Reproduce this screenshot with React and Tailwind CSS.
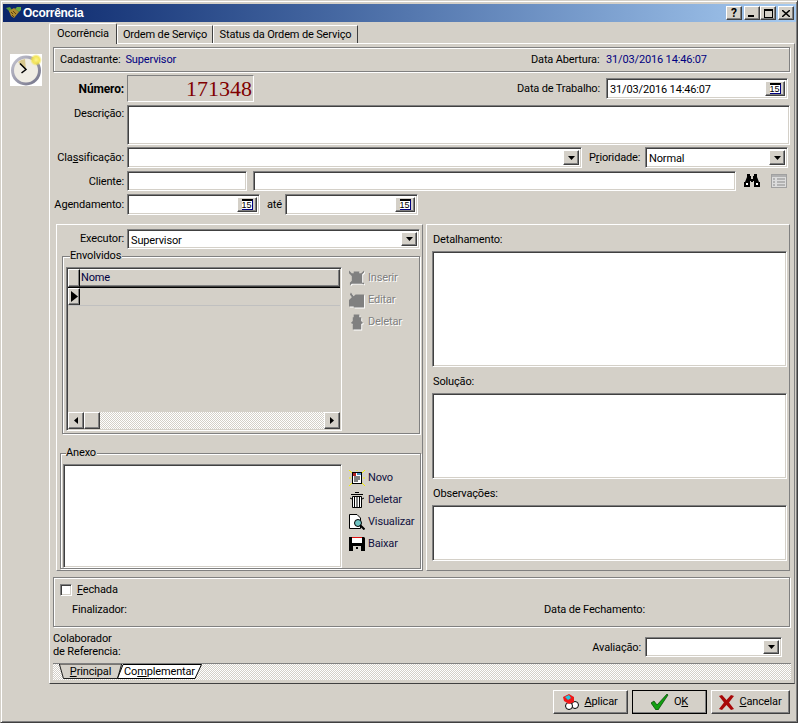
import React from "react";

const raised = "border border-t-white border-l-white border-b-[#404040] border-r-[#404040] shadow-[inset_-1px_-1px_0_#808080]";
const sunken = "border border-t-[#808080] border-l-[#808080] border-b-white border-r-white shadow-[inset_1px_1px_0_#404040,inset_-1px_-1px_0_#d4d0c8]";
const etched = "border border-[#808080] shadow-[1px_1px_0_#ffffff,inset_1px_1px_0_#ffffff]";
const dither = "bg-[repeating-conic-gradient(#ffffff_0_25%,#d4d0c8_0_50%)] bg-[length:2px_2px]";

function Caret({ right }) {
  return right ? (
    <svg width="4" height="7" viewBox="0 0 4 7"><path d="M0 0L4 3.500L0 7Z" fill="#000" /></svg>
  ) : (
    <svg width="4" height="7" viewBox="0 0 4 7"><path d="M4 0L0 3.500L4 7Z" fill="#000" /></svg>
  );
}

function Down() {
  return (
    <svg width="7" height="4" viewBox="0 0 7 4"><path d="M0 0H7L3.500 4Z" fill="#000" /></svg>
  );
}

function Combo({ className, value }) {
  return (
    <div className={`${sunken} bg-white flex items-stretch p-[2px] ${className}`}>
      <div className="flex-1 pl-[1px] leading-[17px]">{value}</div>
      <div className={`${raised} bg-[#d4d0c8] w-[16px] flex items-center justify-center`}>
        <Down />
      </div>
    </div>
  );
}

function DateBtn() {
  return (
    <div className={`${raised} bg-[#d4d0c8] w-[20px] flex items-center justify-center`}>
      <span className="w-[11px] h-[11px] border-t-[2px] border-r border-b border-t-black border-r-[#000080] border-b-[#000080] bg-white text-[9px] leading-[9px] tracking-[0px] text-center text-black font-['Liberation_Sans',sans-serif]">15</span>
    </div>
  );
}

function DateEdit({ className, value }) {
  return (
    <div className={`${sunken} bg-white flex items-stretch p-[2px] ${className}`}>
      <div className="flex-1 pl-[1px] leading-[17px]">{value}</div>
      <DateBtn />
    </div>
  );
}

function Edit({ className }) {
  return <div className={`${sunken} bg-white ${className}`} />;
}

function Label({ children, className = "" }) {
  return <div className={`w-[74px] shrink-0 text-right pr-[3px] whitespace-nowrap ${className}`}>{children}</div>;
}

function Legend({ children, className }) {
  return <span className={`absolute top-[-8px] bg-[#d4d0c8] leading-[14px] pr-[1px] ${className}`}>{children}</span>;
}

function ClockIcon() {
  return (
    <svg width="32" height="32" viewBox="0 0 32 32" className="block">
      <defs>
        <radialGradient id="glow" cx="0.5" cy="0.5" r="0.5">
          <stop offset="0" stopColor="#fff68a" />
          <stop offset="0.6" stopColor="#f2e24a" stopOpacity="0.9" />
          <stop offset="1" stopColor="#f2e24a" stopOpacity="0" />
        </radialGradient>
        <linearGradient id="ring" x1="0" y1="0" x2="1" y2="1">
          <stop offset="0" stopColor="#c8c8d4" />
          <stop offset="1" stopColor="#6f6f85" />
        </linearGradient>
      </defs>
      <rect width="32" height="32" fill="#fff" />
      <circle cx="16" cy="16.500" r="15" fill="url(#ring)" />
      <circle cx="16" cy="16.500" r="12" fill="#efece4" />
      <path d="M16 16L8 8A12 12 0 0 1 15 5Z" fill="#d8c88e" />
      <path d="M10 9.500L16 15.500L11.500 19" fill="none" stroke="#000" strokeWidth="1.500" />
      <circle cx="26" cy="6" r="6" fill="url(#glow)" />
    </svg>
  );
}

function HandIcon() {
  return (
    <svg width="16" height="14" viewBox="0 0 16 14" className="block">
      <path d="M0 2L4 1L6 4L4 6Z" fill="#5a9a3c" />
      <path d="M15 1L11 1L9 3L13 6L15 4Z" fill="#6aaa44" />
      <path d="M3 5L8 2L13 6L8 12L5 10Z" fill="#b08a2e" />
      <path d="M5 6L7 8M7 5L10 8M6 9L8 11" stroke="#5c4210" strokeWidth="1" />
    </svg>
  );
}

function Binoculars() {
  return (
    <svg width="16" height="14" viewBox="0 0 16 14" className="block">
      <path d="M3 0H6V2H7V5H9V2H10V0H13V3L15 8H16V13H10V7H9V8H7V7H6V13H0V8H1L3 3Z" fill="#000" />
      <rect x="2" y="9" width="2" height="2" fill="#fff" />
      <rect x="12" y="9" width="2" height="2" fill="#fff" />
    </svg>
  );
}

function ListIcon() {
  return (
    <svg width="16" height="14" viewBox="0 0 16 14" className="block">
      <rect x="0.500" y="0.500" width="15" height="13" fill="#dcdcdc" stroke="#a0a0a0" />
      <rect x="1" y="1" width="14" height="2" fill="#b0b0b0" />
      <path d="M2 5H4M2 8H4M2 11H4M6 5H14M6 8H14M6 11H14" stroke="#8a8a8a" strokeWidth="1" />
    </svg>
  );
}

function DisabledIcon({ kind }) {
  const d = {
    ins: "M0 0L3 3H5V1H11V3H13L16 0V2L14 4V13H16V15L14 14H3L1 16V13L3 11V6L0 3Z",
    edit: "M2 0L5 4L7 2H16V16H5V15H0V8L2 6L3 5L1 2Z",
    del: "M5 0H11V3H13V7L15 9L13 10V16H4V10L2 9L4 7V3H5Z",
  }[kind];
  return (
    <svg width="16" height="17" viewBox="0 0 17 17" className="block overflow-visible">
      <path d={d} fill="#fff" transform="translate(1 1)" />
      <path d={d} fill="#808080" />
    </svg>
  );
}

function NovoIcon() {
  return (
    <svg width="16" height="16" viewBox="0 0 16 16" className="block">
      <path d="M0 0L3 3M16 0L13 3M0 16L3 13M16 16L13 13M0 8H2M14 8H16M8 0V1" stroke="#f4f000" strokeWidth="1" />
      <rect x="3.500" y="2.500" width="9" height="11" fill="#fff" stroke="#000" />
      <rect x="4" y="3" width="3" height="3" fill="#b02020" />
      <rect x="8" y="3" width="4" height="2" fill="#4a90c0" />
      <path d="M5 7H11M5 9H11M5 11H9" stroke="#000" strokeWidth="1" />
    </svg>
  );
}

function TrashIcon() {
  return (
    <svg width="16" height="16" viewBox="0 0 16 16" className="block">
      <path d="M6 0.500H10M2 2.500H14" stroke="#000" strokeWidth="1" />
      <path d="M3.500 4.500H12.500V15.500H3.500Z" fill="#fff" stroke="#000" />
      <path d="M5.500 5V15M8 5V15M10.500 5V15" stroke="#000" strokeWidth="1" />
      <path d="M1 6L3 7M15 6L13 7" stroke="#000" strokeWidth="1" />
    </svg>
  );
}

function ViewIcon() {
  return (
    <svg width="16" height="16" viewBox="0 0 16 16" className="block">
      <path d="M0.500 0.500H8L11.500 4V14.500H0.500Z" fill="#fff" stroke="#000" />
      <circle cx="9" cy="9" r="3.500" fill="#6fc3c3" stroke="#000" />
      <path d="M11 11L15.500 15.500" stroke="#000" strokeWidth="2" />
    </svg>
  );
}

function DiskIcon() {
  return (
    <svg width="16" height="16" viewBox="0 0 16 16" className="block">
      <path d="M0 1H15L16 2V15H0Z" fill="#000" />
      <rect x="3" y="1" width="10" height="1" fill="#e01010" />
      <rect x="3" y="2" width="10" height="5" fill="#fff" />
      <rect x="4" y="10" width="8" height="5" fill="#d4d0c8" />
      <rect x="7" y="11" width="2" height="2" fill="#000" />
    </svg>
  );
}

function ApplyIcon() {
  return (
    <svg width="16" height="16" viewBox="0 0 16 16" className="block">
      <circle cx="12" cy="11" r="3.500" fill="#fff" stroke="#000" />
      <circle cx="6" cy="12" r="3.500" fill="#fff" stroke="#000" />
      <path d="M0 3L6 0L11 3L11 8L6 10L1 7Z" fill="#f01818" />
      <path d="M2 3L6 1L8 4L5 6Z" fill="#22c8e0" />
    </svg>
  );
}

function CheckIcon() {
  return (
    <svg width="18" height="16" viewBox="0 0 18 16" className="block">
      <path d="M0 9L3 7L6 11L16 0L17 1L7 16H5Z" fill="#12a012" stroke="#004000" strokeWidth="0.700" />
    </svg>
  );
}

function CrossIcon() {
  return (
    <svg width="15" height="15" viewBox="0 0 15 15" className="block">
      <path d="M0 1L3 0L7.500 5L12 0L15 1L10 7.500L15 14L12 15L7.500 10L3 15L0 14L5 7.500Z" fill="#a80808" />
    </svg>
  );
}

function SideBtn({ icon, disabled, children }) {
  return (
    <div className="h-[22px] flex items-center">
      <div className="w-[19px] shrink-0">{icon}</div>
      <span className={disabled ? "text-[#808080] [text-shadow:1px_1px_0_#ffffff]" : "text-[#101040]"}>{children}</span>
    </div>
  );
}

function TitleBtn({ children, className = "" }) {
  return (
    <div className={`${raised} w-[16px] h-[14px] bg-[#d4d0c8] flex items-center justify-center text-black ${className}`}>
      {children}
    </div>
  );
}

function Tab({ children, active, className }) {
  return active ? (
    <div className={`relative z-10 h-[21px] -mb-[1px] bg-[#d4d0c8] border-t border-l border-white border-r border-r-[#404040] rounded-t-[2px] flex items-center justify-center whitespace-nowrap ${className}`}>
      {children}
    </div>
  ) : (
    <div className={`h-[18px] bg-[#d4d0c8] border-t border-l border-white border-r border-r-[#404040] flex items-center justify-center pt-[1px] whitespace-nowrap ${className}`}>
      {children}
    </div>
  );
}

function BottomTab({ children, w, white, points }) {
  return (
    <div className={`relative h-[15px] flex items-center justify-center ${w}`}>
      <svg className="absolute inset-0" width="100%" height="100%" viewBox="0 0 85 15" preserveAspectRatio="none">
        <polygon points={points} fill={white ? "#fff" : "#d4d0c8"} stroke="#000" strokeWidth="1" />
      </svg>
      <span className="relative leading-[14px]">{children}</span>
    </div>
  );
}

function Btn({ children, icon, strong, className }) {
  return (
    <div className={`${strong ? "outline outline-1 outline-black -outline-offset-1" : ""} ${raised} h-[24px] bg-[#d4d0c8] flex items-center justify-center gap-[5px] ${className}`}>
      {icon}
      <span>{children}</span>
    </div>
  );
}

function Memo({ className }) {
  return <div className={`${sunken} bg-white ml-[5px] w-[355px] ${className}`} />;
}

export default function App() {
  return (
    <div className="w-[798px] h-[723px] box-border bg-[#d4d0c8] border border-t-[#d4d0c8] border-l-[#d4d0c8] border-r-[#404040] border-b-[#404040] shadow-[inset_1px_1px_0_#ffffff,inset_-1px_-1px_0_#808080] pt-[3px] pl-[2px] pr-[2px] text-[11px] leading-[14px] tracking-[-0.15px] text-black font-['Roboto',sans-serif] overflow-hidden">
      {/* title bar */}
      <div className="h-[18px] w-[793px] flex items-center bg-gradient-to-r from-[#0a246a] to-[#a6caf0] pl-[3px] pr-[2px]">
        <HandIcon />
        <span className="ml-[1px] text-white font-bold text-[12px] tracking-[-0.3px] flex-1 font-['Liberation_Sans',sans-serif]">Ocorrência</span>
        <TitleBtn className="font-bold text-[12px] mr-[2px]">?</TitleBtn>
        <TitleBtn>
          <span className="w-[6px] h-[2px] bg-black mt-[6px] mr-[2px]" />
        </TitleBtn>
        <TitleBtn className="mr-[2px]">
          <span className="w-[9px] h-[9px] border border-t-[2px] border-black" />
        </TitleBtn>
        <TitleBtn>
          <svg width="8" height="7" viewBox="0 0 8 7"><path d="M0 0L8 7M8 0L0 7" stroke="#000" strokeWidth="1.500" /></svg>
        </TitleBtn>
      </div>

      <div className="flex h-[662px]">
        {/* left gutter */}
        <div className="w-[46px] shrink-0 pt-[32px] pl-[7px]">
          <ClockIcon />
        </div>

        {/* tabbed area */}
        <div className="w-[746px] shrink-0">
          <div className="h-[21px] flex items-end">
            <Tab active className="w-[68px]">Ocorrência</Tab>
            <Tab className="w-[96px]">Ordem de Serviço</Tab>
            <Tab className="w-[145px]">Status da Ordem de Serviço</Tab>
          </div>

          <div className="h-[641px] border border-t-white border-l-white border-r-[#808080] border-b-[#404040] pl-[3px] pt-[3px]">
            <div className={`${etched} w-[737px] h-[25px] flex items-center pl-[6px]`}>
              <span className="w-[471px] flex">
                <span>Cadastrante:</span>
                <span className="ml-[5px] text-[#000080]">Supervisor</span>
              </span>
              <span className="w-[75px]">Data Abertura:</span>
              <span className="text-[#000080]">31/03/2016 14:46:07</span>
            </div>

            <div className="mt-[3px] h-[27px] flex items-center">
              <Label className="font-bold text-[12px]">Número:</Label>
              <div className={`w-[127px] h-[27px] border border-t-[#808080] border-l-[#808080] border-b-white border-r-white flex items-center justify-end pr-[1px] text-[#800000] text-[22px] tracking-[0px] font-['Liberation_Serif',serif]`}>
                171348
              </div>
              <div className="w-[252px] shrink-0" />
              <div className="w-[100px] shrink-0 text-right pr-[6px] whitespace-nowrap">Data de Trabalho:</div>
              <DateEdit className="w-[182px] h-[21px]" value="31/03/2016 14:46:07" />
            </div>

            <div className="mt-[3px] h-[40px] flex">
              <Label className="pt-[2px]">Descrição:</Label>
              <Edit className="w-[663px] h-[40px]" />
            </div>

            <div className="mt-[2px] h-[21px] flex items-center">
              <Label className="pt-[1px]">
                Cla<u>s</u>sificação:
              </Label>
              <Combo className="w-[455px] h-[21px]" />
              <div className="ml-[7px] w-[56px] pt-[1px]">
                P<u>r</u>ioridade:
              </div>
              <Combo className="w-[143px] h-[21px]" value="Normal" />
            </div>

            <div className="mt-[3px] h-[20px] flex items-center">
              <Label className="pt-[2px]">Cliente:</Label>
              <Edit className="w-[120px] h-[20px]" />
              <Edit className="ml-[6px] w-[483px] h-[20px]" />
              <div className="ml-[8px]"><Binoculars /></div>
              <div className="ml-[11px]"><ListIcon /></div>
            </div>

            <div className="mt-[3px] h-[20px] flex items-center">
              <Label className="pt-[2px]">Agendamento:</Label>
              <DateEdit className="w-[133px] h-[21px]" />
              <span className="ml-[7px] w-[18px] pt-[2px]">até</span>
              <DateEdit className="w-[133px] h-[21px]" />
            </div>

            {/* lower panels */}
            <div className="mt-[10px] ml-[3px] h-[347px] flex">
              <div className="w-[367px] h-[347px] border border-t-white border-l-white border-b-[#808080] border-r-[#808080] pt-[3px]">
                <div className="h-[21px] flex items-center">
                  <div className="w-[70px] shrink-0 text-right pr-[3px]">Executor:</div>
                  <Combo className="w-[293px] h-[20px]" value="Supervisor" />
                </div>

                <div className={`${etched} relative mt-[7px] ml-[5px] w-[358px] h-[178px] pl-[3px] pt-[10px]`}>
                  <Legend className="left-[7px]">Envolvidos</Legend>
                  <div className="flex">
                    <div className={`${sunken} w-[276px] h-[164px] bg-[#d4d0c8] p-[1px] flex flex-col`}>
                      <div className="flex h-[19px] shrink-0 border-b border-black">
                        <div className={`${raised} border-r-black w-[12px]`} />
                        <div className={`${raised} border-l-0 flex-1 flex items-center pl-[1px] text-[#000040]`}>Nome</div>
                      </div>
                      <div className="flex h-[18px] shrink-0 border-b border-[#c0c0c0]">
                        <div className={`${raised} border-r-black w-[12px] flex items-center justify-start pl-[2px]`}>
                          <svg width="7" height="11" viewBox="0 0 7 11"><path d="M0 0L7 5.500L0 11Z" fill="#000" /></svg>
                        </div>
                      </div>
                      <div className="flex-1" />
                      <div className="flex h-[17px] shrink-0">
                        <div className={`${raised} w-[16px] bg-[#d4d0c8] flex items-center justify-center`}><Caret /></div>
                        <div className={`${raised} w-[16px] bg-[#d4d0c8]`} />
                        <div className={`flex-1 ${dither}`} />
                        <div className={`${raised} w-[16px] bg-[#d4d0c8] flex items-center justify-center`}><Caret right /></div>
                      </div>
                    </div>
                    <div className="ml-[7px]">
                      <SideBtn disabled icon={<DisabledIcon kind="ins" />}>Inserir</SideBtn>
                      <SideBtn disabled icon={<DisabledIcon kind="edit" />}>Editar</SideBtn>
                      <SideBtn disabled icon={<DisabledIcon kind="del" />}>Deletar</SideBtn>
                    </div>
                  </div>
                </div>

                <div className={`${etched} relative mt-[19px] ml-[3px] w-[361px] h-[116px] pl-[2px] pt-[10px]`}>
                  <Legend className="left-[5px]">Anexo</Legend>
                  <div className="flex">
                    <div className={`${sunken} w-[279px] h-[104px] bg-white`} />
                    <div className="ml-[7px] mt-[3px]">
                      <SideBtn icon={<NovoIcon />}>Novo</SideBtn>
                      <SideBtn icon={<TrashIcon />}>Deletar</SideBtn>
                      <SideBtn icon={<ViewIcon />}>Visualizar</SideBtn>
                      <SideBtn icon={<DiskIcon />}>Baixar</SideBtn>
                    </div>
                  </div>
                </div>
              </div>

              <div className="w-[364px] h-[347px] ml-[3px] border border-t-white border-l-white border-b-[#808080] border-r-[#808080]">
                <div className="pl-[6px] pt-[8px] h-[26px]">Detalhamento:</div>
                <Memo className="h-[116px]" />
                <div className="pl-[6px] pt-[8px] h-[26px]">Solução:</div>
                <Memo className="h-[86px]" />
                <div className="pl-[6px] pt-[8px] h-[26px]">Observações:</div>
                <Memo className="h-[56px]" />
              </div>
            </div>

            <div className={`${etched} mt-[6px] w-[737px] h-[50px] pl-[6px] pt-[5px]`}>
              <div className="flex items-center h-[13px]">
                <div className={`${sunken} w-[12px] h-[12px] bg-white`} />
                <span className="ml-[5px]"><u>F</u>echada</span>
              </div>
              <div className="flex mt-[7px] pl-[12px]">
                <span className="w-[472px]">Finalizador:</span>
                <span>Data de Fechamento:</span>
              </div>
            </div>

            <div className="mt-[4px] h-[32px] flex items-start">
              <div className="w-[530px] pt-[1px] leading-[13px]">
                Colaborador<br />de Referencia:
              </div>
              <div className="w-[62px] pt-[10px] text-right pr-[4px]">Avaliação:</div>
              <Combo className="mt-[6px] w-[137px] h-[20px]" />
            </div>

            <div className={`w-[738px] h-[17px] border-t border-[#808080] pl-[6px] ${dither} flex items-start`}>
              <BottomTab w="w-[63px]" points="0.500,0 6,14.500 79,14.500 84.500,0" ><u>P</u>rincipal</BottomTab>
              <BottomTab w="w-[85px] -ml-[5px]" white points="6,0.500 0.500,14.500 78,14.500 84.500,0.500">Co<u>m</u>plementar</BottomTab>
            </div>
          </div>
        </div>
      </div>

      {/* footer buttons */}
      <div className="pt-[6px] flex justify-start pl-[550px]">
        <Btn icon={<ApplyIcon />} className="w-[75px]"><u>A</u>plicar</Btn>
        <Btn strong icon={<CheckIcon />} className="w-[75px] ml-[4px]">O<u>K</u></Btn>
        <Btn icon={<CrossIcon />} className="w-[79px] ml-[4px]"><u>C</u>ancelar</Btn>
      </div>
    </div>
  );
}
